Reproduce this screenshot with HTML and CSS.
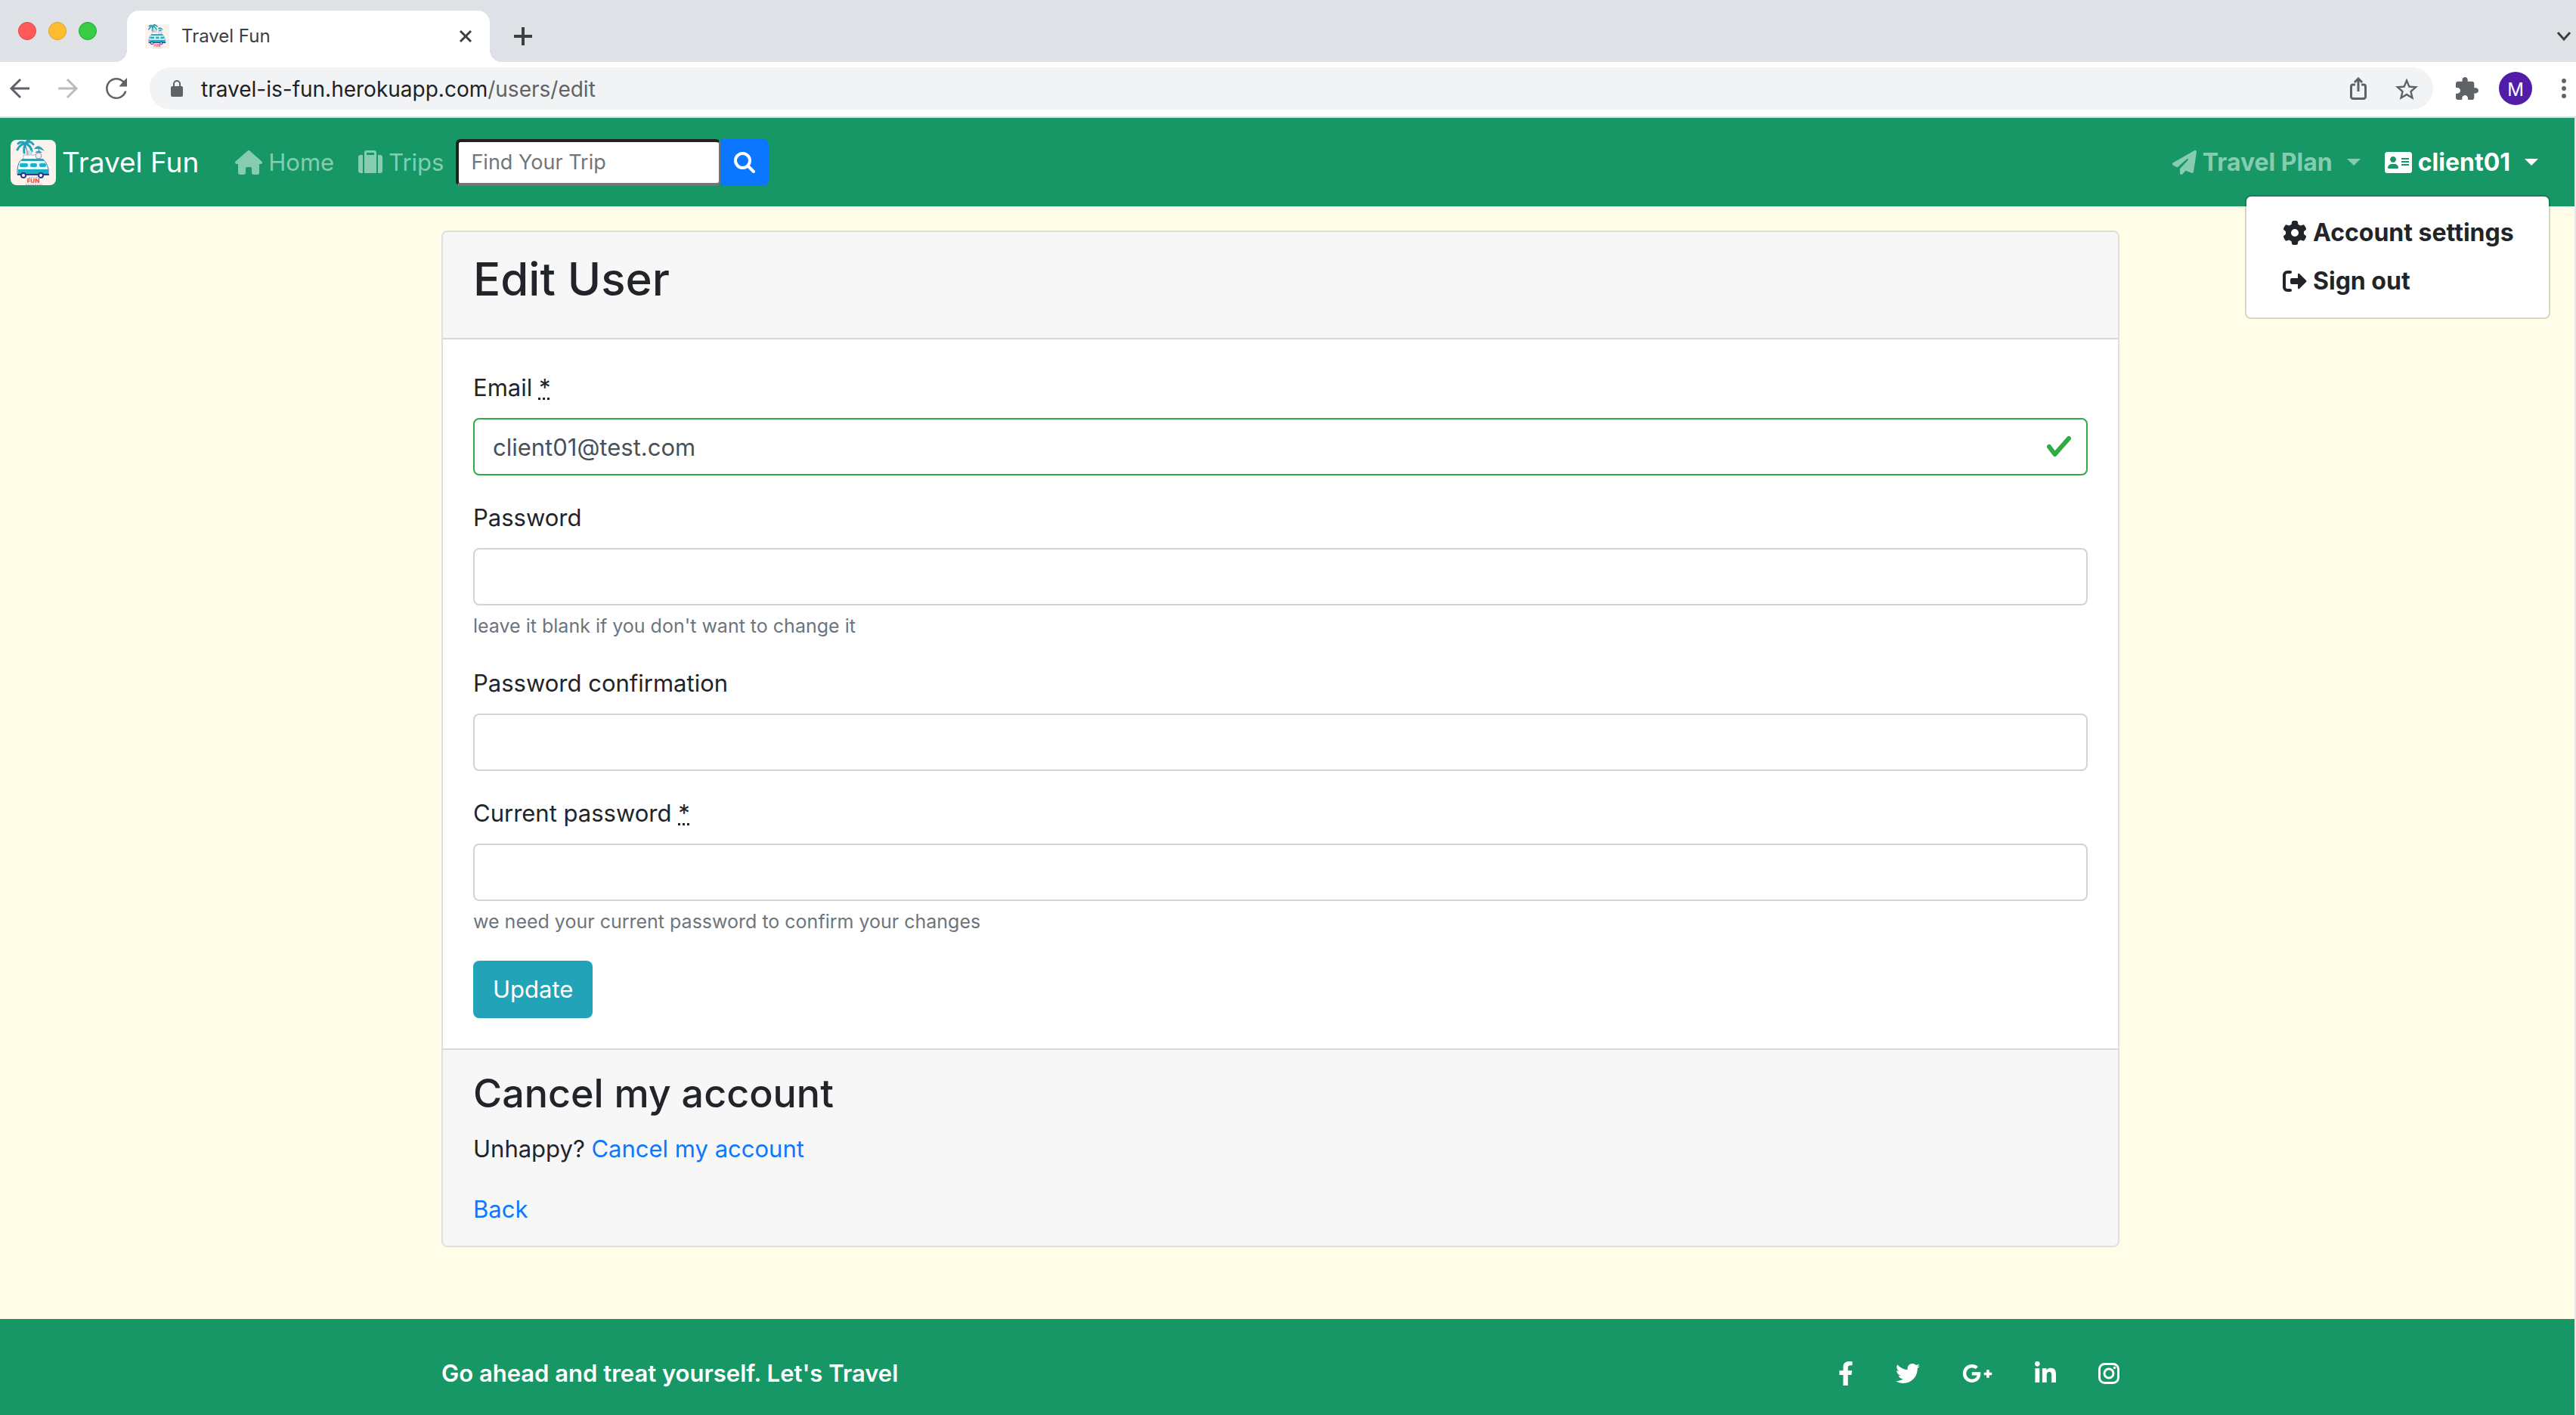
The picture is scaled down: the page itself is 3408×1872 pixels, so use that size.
FILE: index.html
```html
<!DOCTYPE html>
<html lang="en">
<head>
<meta charset="utf-8">
<title>Travel Fun</title>
<link rel="stylesheet" href="styles.css">
</head>
<body>
<svg class="sprite" aria-hidden="true">
  <symbol id="van" viewBox="0 0 60 60">
    <rect width="60" height="60" fill="#fbf3ec"/>
    <g fill="none" stroke="#1fa3bd" stroke-width="3" stroke-linecap="round">
      <path d="M20 5Q14 1 10 5M20 5Q13 5 9 13M20 5Q17 10 18 17M20 5Q26 0 30 6M20 5Q27 8 28 15M20 5Q21 1 25 0"/>
    </g>
    <path d="M19 7Q23 13 22 25" fill="none" stroke="#3d6fa5" stroke-width="1"/>
    <path d="M31 12Q37 3 45 15L38 12Z" fill="#1fa3bd"/>
    <path d="M37 12L39 17" stroke="#3d5fa5" stroke-width="1"/>
    <path d="M17 20H35V26H17Z" fill="#fff" stroke="#aab6c8" stroke-width="1"/>
    <circle cx="37" cy="21" r="4" fill="#f4e9ea" stroke="#8a9cbd" stroke-width="1"/>
    <path d="M32 17Q37 12 42 17Z" fill="#2c9fc0"/>
    <path d="M24 14V20M27 14V20" stroke="#c9cfda" stroke-width="2"/>
    <path d="M15 26H43Q48 30 50 39V46H9V39Q10 29 15 26Z" fill="#f2f7f7" stroke="#4673a8" stroke-width="1"/>
    <path d="M16 25H43L45 28H14Z" fill="#329eae"/>
    <path d="M10 39H50V46H10Z" fill="#16b0c4"/>
    <rect x="12" y="31" width="11" height="5" rx="2" fill="#16b5cb"/>
    <rect x="26" y="31" width="9" height="5" rx="2" fill="#16b5cb"/>
    <rect x="38" y="31" width="9" height="5" rx="2" fill="#16b5cb"/>
    <path d="M9 46H51" stroke="#2a3f8c" stroke-width="2"/>
    <circle cx="17" cy="47" r="3" fill="#fff" stroke="#273a87" stroke-width="2"/>
    <circle cx="40" cy="47" r="3" fill="#fff" stroke="#273a87" stroke-width="2"/>
    <text x="30" y="57" class="van-word">FUN</text>
    <path d="M24 49.500H38M20 59H42" stroke="#9aa4c6" stroke-width="1" stroke-dasharray="2 1"/>
  </symbol>
</svg>

<header class="browser">
  <div class="tabstrip">
    <div class="lights"><span class="light light-red"></span><span class="light light-amber"></span><span class="light light-green"></span></div>
    <div class="tab">
      <svg class="favicon"><use href="#van"/></svg>
      <span class="tab-title">Travel Fun</span>
      <button class="bare" aria-label="Close tab"><svg width="18" height="18" viewBox="0 0 18 18"><path d="M2 2L16 16M16 2L2 16" stroke="#3c4043" stroke-width="3"/></svg></button>
    </div>
    <button class="bare" aria-label="New tab"><svg width="26" height="26" viewBox="0 0 26 26"><path d="M13 1V25M1 13H25" stroke="#3c4043" stroke-width="4"/></svg></button>
    <button class="bare tab-search" aria-label="Search tabs"><svg width="20" height="14" viewBox="0 0 20 14"><path d="M2 2L10 11L18 2" fill="none" stroke="#3c4043" stroke-width="3"/></svg></button>
  </div>
  <div class="toolbar">
    <div class="history">
      <button class="bare" aria-label="Back"><svg width="28" height="28" viewBox="0 0 28 28"><path d="M27 14H3M15 2L3 14L15 26" fill="none" stroke="#5f6368" stroke-width="3"/></svg></button>
      <button class="bare" aria-label="Forward"><svg width="28" height="28" viewBox="0 0 28 28"><path d="M1 14H25M13 2L25 14L13 26" fill="none" stroke="#babcbe" stroke-width="3"/></svg></button>
      <button class="bare" aria-label="Reload"><svg width="28" height="28" viewBox="4 4 16 16"><path fill="#5f6368" d="M17.650 6.350C16.200 4.900 14.210 4 12 4c-4.420 0-7.990 3.580-7.990 8s3.570 8 7.990 8c3.730 0 6.840-2.550 7.730-6h-1.600c-.82 2.600-3.300 4.600-6.130 4.600-3.600 0-6.500-2.900-6.500-6.600s2.900-6.600 6.500-6.600c1.800 0 3.400.8 4.600 1.900L14 10.500h6V4l-2.350 2.350z"/></svg></button>
    </div>
    <div class="omnibox">
      <svg width="16" height="22" viewBox="0 0 16 22"><rect y="8" width="16" height="14" rx="2" fill="#5f6368"/><path d="M4 9V5a4 4 0 0 1 8 0V9" fill="none" stroke="#5f6368" stroke-width="2"/></svg>
      <p class="url">travel-is-fun.herokuapp.com<span class="url-path">/users/edit</span></p>
      <button class="bare" aria-label="Share"><svg width="22" height="30" viewBox="0 0 22 30"><path d="M7 10H4a2.500 2.500 0 0 0-2.500 2.500V26A2.500 2.500 0 0 0 4 28.500H18A2.500 2.500 0 0 0 20.500 26V12.500A2.500 2.500 0 0 0 18 10H15M11 19V2M6 7L11 2L16 7" fill="none" stroke="#5f6368" stroke-width="3"/></svg></button>
      <button class="bare" aria-label="Bookmark"><svg width="30" height="30" viewBox="2 1 20 20"><path fill="#5f6368" d="M22 9.240l-7.190-.62L12 2 9.190 8.630 2 9.240l5.460 4.730L5.820 21 12 17.270 18.180 21l-1.630-7.030L22 9.240zM12 15.400l-3.760 2.270 1-4.280-3.320-2.880 4.380-.38L12 6.100l1.710 4.040 4.380.38-3.320 2.880 1 4.280L12 15.400z"/></svg></button>
    </div>
    <div class="extras">
      <button class="bare" aria-label="Extensions"><svg width="30" height="30" viewBox="2 1 21 21"><path fill="#5f6368" d="M20.500 11H19V7c0-1.100-.9-2-2-2h-4V3.500C13 2.120 11.880 1 10.500 1S8 2.120 8 3.500V5H4c-1.100 0-1.990.9-1.990 2v3.800H3.500c1.490 0 2.700 1.210 2.700 2.700s-1.210 2.700-2.700 2.700H2V20c0 1.100.9 2 2 2h3.800v-1.500c0-1.490 1.210-2.700 2.700-2.700 1.490 0 2.700 1.210 2.700 2.700V22H17c1.100 0 2-.9 2-2v-4h1.500c1.380 0 2.500-1.120 2.500-2.500S21.880 11 20.500 11z"/></svg></button>
      <button class="avatar" aria-label="Profile">M</button>
      <button class="bare menu-dots" aria-label="Menu"><svg width="6" height="26" viewBox="0 0 6 26" fill="#5f6368"><circle cx="3" cy="3" r="3"/><circle cx="3" cy="13" r="3"/><circle cx="3" cy="23" r="3"/></svg></button>
    </div>
  </div>
</header>

<div class="page">
  <nav class="navbar">
    <a class="brand" href="#"><svg class="brand-logo"><use href="#van"/></svg>Travel Fun</a>
    <a class="nav-link" href="#"><svg width="36" height="32" viewBox="0 0 576 512"><path fill="currentColor" d="M575.800 255.500c0 18-15 32.100-32 32.100h-32l.7 160.200c0 2.700-.2 5.400-.5 8.100V472c0 22.100-17.900 40-40 40H392c-22.100 0-40-17.900-40-40V384c0-17.700-14.300-32-32-32H256c-17.700 0-32 14.300-32 32v88c0 22.100-17.900 40-40 40H104c-22.100 0-40-17.900-40-40V287.600H32c-18 0-32-14-32-32.100c0-9 3-17 10-24L266.400 8c7-7 15-8 22-8s15 2 21 7L564.800 231.500c8 7 12 15 11 24z"/></svg>Home</a>
    <a class="nav-link" href="#"><svg width="32" height="32" viewBox="0 0 32 32" fill="currentColor"><path d="M8 30V3a3 3 0 0 1 3-3H21a3 3 0 0 1 3 3V30ZM11 3V6H21V3Z" fill-rule="evenodd"/><path d="M6 6V30H3a3 3 0 0 1-3-3V9A3 3 0 0 1 3 6ZM26 6V30H29a3 3 0 0 0 3-3V9A3 3 0 0 0 29 6Z"/></svg>Trips</a>
    <form class="search">
      <input class="search-input" type="text" placeholder="Find Your Trip" aria-label="Find Your Trip">
      <button class="search-button" type="button" aria-label="Search"><svg width="28" height="28" viewBox="0 0 28 28" fill="none" stroke="#fff" stroke-width="4" stroke-linecap="round"><circle cx="11.500" cy="11.500" r="9.500"/><path d="M18.500 18.500L26 26"/></svg></button>
    </form>
    <a class="nav-link nav-strong nav-end" href="#"><svg width="32" height="32" viewBox="0 0 512 512"><path fill="currentColor" d="M498.100 5.600c10.100 7 15.400 19.100 13.500 31.200l-64 416c-1.500 9.700-7.400 18.200-16 23s-18.900 5.400-28 1.600L284 427.700l-68.500 74.100c-8.900 9.700-22.900 12.900-35.200 8.100S160 493.200 160 480V396.400c0-4 1.500-7.800 4.200-10.700L331.800 202.800c5.800-6.300 5.600-16-.4-22s-15.700-6.400-22-.7L106 360.800 17.700 316.600C7.100 311.300 .3 300.700 0 288.900s5.900-22.800 16.100-28.700l448-256c10.700-6.100 23.900-5.500 34 1.400z"/></svg>Travel Plan<span class="caret"></span></a>
    <div class="account">
      <a class="nav-link nav-strong nav-active" href="#"><svg width="36" height="28" viewBox="0 0 36 28"><path fill="currentColor" fill-rule="evenodd" d="M3.500 0H32.500A3.500 3.500 0 0 1 36 3.500V24.500A3.500 3.500 0 0 1 32.500 28H3.500A3.500 3.500 0 0 1 0 24.500V3.500A3.500 3.500 0 0 1 3.500 0ZM11 6a4 4 0 1 0 .01 0ZM9 16a5 5 0 0 0-5 5q0 1 1 1H17q1 0 1-1a5 5 0 0 0-5-5ZM22 8V10H32V8ZM22 12V14H32V12ZM22 16V18H32V16Z"/></svg>client01<span class="caret"></span></a>
      <div class="dropdown">
        <a class="dropdown-item" href="#"><svg width="32" height="32" viewBox="0 0 512 512"><path fill="currentColor" d="M495.900 166.600c3.200 8.700 .5 18.400-6.400 24.600l-43.300 39.400c1.100 8.300 1.700 16.800 1.700 25.400s-.6 17.100-1.700 25.400l43.300 39.400c6.900 6.200 9.600 15.900 6.400 24.600c-4.400 11.900-9.700 23.300-15.800 34.300l-4.700 8.100c-6.600 11-14 21.400-22.100 31.200c-5.900 7.200-15.700 9.600-24.500 6.800l-55.700-17.700c-13.400 10.300-28.200 18.900-44 25.400l-12.500 57.100c-2 9.100-9 16.300-18.200 17.800c-13.800 2.300-28 3.500-42.500 3.500s-28.700-1.200-42.500-3.500c-9.200-1.500-16.200-8.700-18.200-17.800l-12.500-57.100c-15.800-6.500-30.600-15.100-44-25.400L83.100 425.900c-8.800 2.800-18.600 .3-24.500-6.800c-8.100-9.800-15.500-20.200-22.100-31.200l-4.700-8.100c-6.100-11-11.400-22.400-15.800-34.300c-3.200-8.700-.5-18.400 6.400-24.600l43.300-39.400C64.600 273.100 64 264.600 64 256s.6-17.100 1.700-25.400L22.400 191.200c-6.900-6.200-9.600-15.900-6.400-24.600c4.400-11.900 9.700-23.300 15.800-34.300l4.700-8.100c6.600-11 14-21.400 22.100-31.200c5.900-7.200 15.700-9.600 24.500-6.800l55.700 17.700c13.400-10.300 28.200-18.900 44-25.400l12.500-57.100c2-9.100 9-16.300 18.200-17.800C227.300 1.200 241.500 0 256 0s28.700 1.200 42.500 3.500c9.200 1.500 16.200 8.700 18.200 17.800l12.500 57.100c15.800 6.500 30.600 15.100 44 25.400l55.700-17.700c8.800-2.800 18.600-.3 24.500 6.800c8.100 9.800 15.500 20.200 22.100 31.200l4.700 8.100c6.100 11 11.400 22.400 15.800 34.300zM256 336a80 80 0 1 0 0-160 80 80 0 1 0 0 160z"/></svg>Account settings</a>
        <a class="dropdown-item" href="#"><svg width="32" height="32" viewBox="0 0 32 32"><path d="M10 4H6a4 4 0 0 0-4 4V24a4 4 0 0 0 4 4H10" fill="none" stroke="currentColor" stroke-width="4" stroke-linecap="round"/><path fill="currentColor" d="M12 12H20V7Q20 5 22 6L31 15Q32 16 31 17L22 26Q20 27 20 25V20H12Q10 20 10 18V14Q10 12 12 12Z"/></svg>Sign out</a>
      </div>
    </div>
  </nav>

  <main class="main">
    <section class="card">
      <div class="card-header"><h2 class="title">Edit User</h2></div>
      <form class="card-body">
        <div class="field">
          <label class="label" for="email">Email <abbr class="required" title="required">*</abbr></label>
          <div class="control">
            <input class="input input-valid" id="email" type="email" value="client01@test.com">
            <svg class="tick" width="32" height="28" viewBox="0 0 32 28"><path d="M3 14L10.500 24L29 3" fill="none" stroke="#31a945" stroke-width="6" stroke-linecap="round" stroke-linejoin="round"/></svg>
          </div>
        </div>
        <div class="field">
          <label class="label" for="password">Password</label>
          <input class="input" id="password" type="password">
          <small class="hint">leave it blank if you don't want to change it</small>
        </div>
        <div class="field">
          <label class="label" for="confirmation">Password confirmation</label>
          <input class="input" id="confirmation" type="password">
        </div>
        <div class="field">
          <label class="label" for="current">Current password <abbr class="required" title="required">*</abbr></label>
          <input class="input" id="current" type="password">
          <small class="hint">we need your current password to confirm your changes</small>
        </div>
        <button class="update" type="button">Update</button>
      </form>
      <div class="card-footer">
        <h3 class="subtitle">Cancel my account</h3>
        <p class="unhappy">Unhappy? <a class="link" href="#">Cancel my account</a></p>
        <a class="link" href="#">Back</a>
      </div>
    </section>
  </main>

  <footer class="footer">
    <div class="footer-inner">
      <p class="slogan">Go ahead and treat yourself. Let's Travel</p>
      <div class="social">
        <a href="#" aria-label="Facebook"><svg width="20" height="32" viewBox="0 0 320 512"><path d="M279.140 288l14.220-92.660h-88.910v-60.130c0-25.350 12.420-50.060 52.240-50.060h40.420V6.260S260.430 0 225.360 0c-73.220 0-121.080 44.380-121.080 124.720v70.620H22.890V288h81.390v224h100.170V288z"/></svg></a>
        <a href="#" aria-label="Twitter"><svg width="32" height="32" viewBox="0 0 512 512"><path d="M459.370 151.716c.325 4.548.325 9.097.325 13.645 0 138.720-105.583 298.558-298.558 298.558-59.452 0-114.680-17.219-161.137-47.106 8.447.974 16.568 1.299 25.340 1.299 49.055 0 94.213-16.568 130.274-44.832-46.132-.975-84.792-31.188-98.112-72.772 6.498.974 12.995 1.624 19.818 1.624 9.421 0 18.843-1.300 27.614-3.573-48.081-9.747-84.143-51.980-84.143-102.985v-1.299c13.969 7.797 30.214 12.670 47.431 13.319-28.264-18.843-46.781-51.005-46.781-87.391 0-19.492 5.197-37.360 14.294-52.954 51.655 63.675 129.300 105.258 216.365 109.807-1.624-7.797-2.599-15.918-2.599-24.040 0-57.828 46.782-104.934 104.934-104.934 30.213 0 57.502 12.670 76.670 33.137 23.715-4.548 46.456-13.320 66.599-25.340-7.798 24.366-24.366 44.833-46.132 57.827 21.117-2.273 41.584-8.122 60.426-16.243-14.292 20.791-32.161 39.308-52.628 54.253z"/></svg></a>
        <a href="#" aria-label="Google Plus"><svg width="40" height="32" viewBox="0 0 640 512"><path d="M386.061 228.496c1.834 9.692 3.143 19.384 3.143 31.956C389.204 370.205 315.599 448 204.800 448c-106.084 0-192-85.915-192-192s85.916-192 192-192c51.864 0 95.083 18.859 128.611 50.292l-52.126 50.030c-14.145-13.621-39.028-29.599-76.485-29.599-65.484 0-118.920 54.221-118.920 121.277 0 67.056 53.436 121.277 118.920 121.277 75.961 0 104.513-54.745 108.965-82.773H204.800v-66.009h181.261zm185.406 6.437V179.200h-56.001v55.733h-55.733v56.001h55.733v55.733h56.001v-55.733H627.200v-56.001h-55.733z"/></svg></a>
        <a href="#" aria-label="LinkedIn"><svg width="28" height="32" viewBox="0 0 448 512"><path d="M100.280 448H7.400V148.900h92.880zM53.790 108.100C24.090 108.100 0 83.500 0 53.800a53.790 53.790 0 0 1 107.580 0c0 29.700-24.100 54.300-53.790 54.300zM447.900 448h-92.680V302.400c0-34.700-.7-79.200-48.290-79.200-48.290 0-55.690 37.700-55.690 76.700V448h-92.780V148.900h89.080v40.800h1.300c12.400-23.500 42.690-48.300 87.880-48.300 94 0 111.280 61.900 111.280 142.300V448z"/></svg></a>
        <a href="#" aria-label="Instagram"><svg width="28" height="32" viewBox="0 0 28 32"><rect x="1.500" y="3.500" width="25" height="25" rx="7" fill="none" stroke="#fff" stroke-width="3"/><circle cx="14" cy="16" r="6" fill="none" stroke="#fff" stroke-width="3"/><circle cx="21.500" cy="8.500" r="1.700"/></svg></a>
      </div>
    </div>
  </footer>
</div>
</body>
</html>
```
FILE: styles.css
```css
* { box-sizing: border-box; }

body {
  margin: 0;
  min-height: 100vh;
  display: flex;
  flex-direction: column;
  font: 31px/48px Inter, "Liberation Sans", sans-serif;
  color: #212529;
  background: #fffce8;
}

h2, h3, p { margin: 0; font-weight: 500; }
a { color: inherit; text-decoration: none; }
button, input { font: inherit; }
svg { display: block; flex: none; }

.sprite { display: none; }
.van-word { font: 800 8px Inter, sans-serif; fill: #ee4f57; text-anchor: middle; }

.bare { display: flex; padding: 0; border: 0; background: none; }

/* Browser frame */
.tabstrip {
  display: flex;
  align-items: center;
  height: 82px;
  padding: 14px 6px 0 24px;
  background: #dee1e6;
}
.lights { display: flex; gap: 16px; align-self: flex-start; padding-top: 15px; margin-right: 40px; }
.light { width: 24px; height: 24px; border-radius: 50%; }
.light-red { background: #fe5a59; border: 1px solid #e0443e; }
.light-amber { background: #febd31; border: 1px solid #dea123; }
.light-green { background: #37cc43; border: 1px solid #1aab29; }

.tab {
  position: relative;
  display: flex;
  align-items: center;
  width: 480px;
  height: 68px;
  margin-right: 31px;
  padding: 0 23px 0 24px;
  border-radius: 16px 16px 0 0;
  background: #fff;
}
.tab::before, .tab::after {
  content: "";
  position: absolute;
  bottom: 0;
  width: 16px;
  height: 16px;
}
.tab::before { right: 100%; background: radial-gradient(circle at 0 0, transparent 16px, #fff 16px); }
.tab::after { left: 100%; background: radial-gradient(circle at 100% 0, transparent 16px, #fff 16px); }
.favicon { width: 32px; height: 32px; margin-right: 16px; }
.tab-title { flex: 1; font-size: 24px; color: #3c4043; }
.tab-search { margin-left: auto; }

.toolbar {
  display: flex;
  align-items: center;
  height: 74px;
  padding: 0 13px 2px 12px;
  border-bottom: 2px solid #dadce0;
  background: #fff;
}
.history { display: flex; gap: 36px; margin-right: 30px; }
.omnibox {
  flex: 1;
  display: flex;
  align-items: center;
  height: 56px;
  padding: 0 20px 0 28px;
  border-radius: 28px;
  background: #f1f3f4;
}
.url { flex: 1; margin-left: 24px; padding-top: 2px; font-size: 28px; font-weight: 400; color: #202124; }
.url-path { color: #5f6368; }
.omnibox .bare:last-child { margin-left: 38px; }
.extras { display: flex; align-items: center; gap: 27px; margin-left: 30px; }
.menu-dots { margin-left: 12px; }
.avatar {
  width: 44px;
  height: 44px;
  padding: 0;
  border: 0;
  border-radius: 50%;
  background: #511da8;
  color: #fff;
  font-size: 24px;
}

/* Page */
.page {
  flex: 1;
  display: flex;
  flex-direction: column;
  border-right: 2px solid #e7e7e7;
}

.navbar {
  display: flex;
  align-items: center;
  height: 117px;
  padding: 0 48px 0 14px;
  background: #179666;
}
.brand { display: flex; align-items: center; gap: 8px; margin-right: 48px; font-size: 37px; color: #fff; }
.brand-logo { width: 60px; height: 60px; border-radius: 8px; }
.nav-link { display: flex; align-items: center; gap: 8px; margin-right: 32px; color: #86ccb1; }
.nav-strong { font-size: 32px; font-weight: 700; }
.nav-active { margin-right: 0; color: #fff; }
.nav-end { margin-left: auto; }
.caret {
  margin-left: 11px;
  border-top: 9px solid currentColor;
  border-left: 9px solid transparent;
  border-right: 9px solid transparent;
}

.search { display: flex; height: 62px; margin-left: -16px; }
.search-input {
  width: 350px;
  padding: 0 16px;
  border: 4px solid #767676;
  border-top-color: #212121;
  border-left-color: #212121;
  border-right-width: 2px;
  border-radius: 6px;
  background: #fff;
  font-size: 27px;
}
.search-input::placeholder { color: #757575; opacity: 1; }
.search-button {
  display: flex;
  align-items: center;
  padding: 0 18px;
  border: 0;
  border-radius: 0 8px 8px 0;
  background: #0b76ff;
}

.account { position: relative; }
.dropdown {
  position: absolute;
  top: 67px;
  right: -16px;
  width: 404px;
  padding: 16px 0;
  border: 2px solid rgba(0, 0, 0, 0.15);
  border-radius: 8px;
  background: #fff;
  background-clip: padding-box;
}
.dropdown-item {
  display: flex;
  align-items: center;
  gap: 8px;
  padding: 8px 40px 8px 48px;
  font-size: 32px;
  font-weight: 700;
  white-space: nowrap;
}

.main { flex: 1; padding: 32px 18px 95px 0; }
.card {
  max-width: 2220px;
  margin: 0 auto;
  border: 2px solid #dededc;
  border-radius: 8px;
  background: #fff;
  overflow: hidden;
}
.card-header { padding: 24px 40px 40px; border-bottom: 2px solid #d8d8d8; background: #f7f7f7; }
.card-body { padding: 40px; }
.card-footer { padding: 24px 40px; border-top: 2px solid #d8d8d8; background: #f7f7f7; }
.title { font-size: 60px; line-height: 76px; }
.subtitle { margin-bottom: 16px; font-size: 52px; line-height: 67px; }
.unhappy { margin-bottom: 32px; font-weight: 400; }
.link { color: #0a78ff; }

.field { margin-bottom: 32px; }
.label { display: block; margin-bottom: 16px; }
.required { text-decoration: underline dotted; }
.control { position: relative; }
.input {
  display: block;
  width: 100%;
  height: 76px;
  padding: 0 24px;
  border: 2px solid #ced4da;
  border-radius: 8px;
  background: #fff;
  color: #495057;
}
.input-valid { border-color: #31a945; }
.tick { position: absolute; right: 22px; top: 24px; }
.hint { display: block; margin-top: 8px; font-size: 25px; line-height: 39px; color: #6c757d; }
.update {
  display: block;
  height: 76px;
  padding: 0 26px;
  border: 0;
  border-radius: 8px;
  background: #23a3b8;
  color: #fff;
}

.footer { padding: 48px 18px 32px 0; background: #179666; color: #fff; }
.footer-inner { display: flex; align-items: center; justify-content: space-between; max-width: 2220px; margin: 0 auto; }
.slogan { font-weight: 600; }
.social { display: flex; gap: 56px; fill: #fff; }
```
